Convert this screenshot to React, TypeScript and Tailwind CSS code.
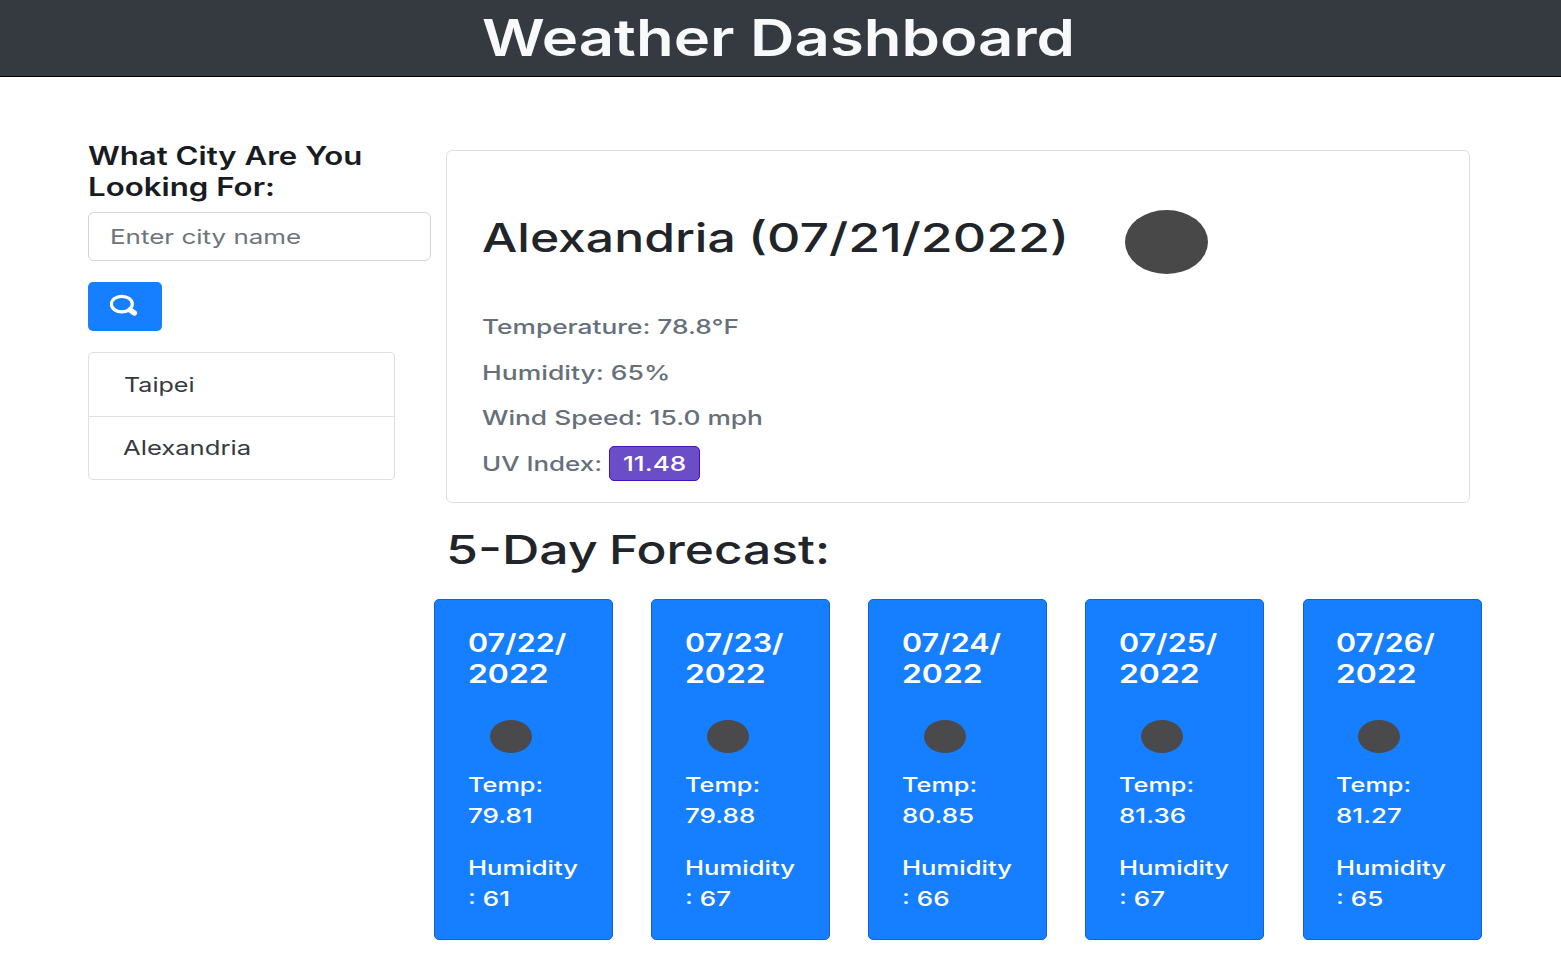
import React from "react";

type TextProps = { className?: string; children: React.ReactNode };

function Wide({ className = "", children }: TextProps) {
  return <span className={`block w-max origin-left whitespace-pre ${className}`}>{children}</span>;
}

const forecast = [
  { day: "07/22/", year: "2022", temp: "79.81", humidity: "61" },
  { day: "07/23/", year: "2022", temp: "79.88", humidity: "67" },
  { day: "07/24/", year: "2022", temp: "80.85", humidity: "66" },
  { day: "07/25/", year: "2022", temp: "81.36", humidity: "67" },
  { day: "07/26/", year: "2022", temp: "81.27", humidity: "65" },
];

function Header() {
  return (
    <header className="flex h-[77px] justify-center border-b border-black bg-[#343a40]">
      <h1 className="mr-[5px] h-[75px] scale-x-[1.208] text-[51px] leading-[75px] font-semibold whitespace-nowrap text-[#f8f9fa]">
        Weather Dashboard
      </h1>
    </header>
  );
}

function SearchIcon() {
  return (
    <svg width="28" height="22" viewBox="0 0 28 22" fill="none" className="block">
      <ellipse cx="11.8" cy="10.1" rx="10.5" ry="7.8" stroke="white" strokeWidth="3.2" />
      <path d="M20 16 L24.4 19" stroke="white" strokeWidth="5.4" strokeLinecap="round" />
    </svg>
  );
}

function Sidebar() {
  return (
    <aside className="w-[343px] pt-[64px]">
      <h5 className="text-[25px] leading-[31px] font-semibold text-[#181b1f]">
        <Wide className="scale-x-[1.246]">What City Are You</Wide>
        <Wide className="scale-x-[1.25]">Looking For:</Wide>
      </h5>
      <div className="mt-[9px] h-[49px] w-[343px] rounded-[6px] border-[1.5px] border-[#ced4da] pl-[20.5px]">
        <input
          type="text"
          placeholder="Enter city name"
          className="block h-[48px] w-[220px] origin-left scale-x-[1.298] bg-transparent text-[20px] outline-none placeholder:text-[#6c757d] placeholder:opacity-100"
        />
      </div>
      <button className="mt-[21px] flex h-[49px] w-[74px] justify-center rounded-[5px] bg-[#167fff] pt-[12px] pr-[3px]">
        <SearchIcon />
      </button>
      <ul className="mt-[21px] h-[128px] w-[307px] rounded-[5px] border-[1.5px] border-[#dfdfdf] text-[20px] text-[#343a40]">
        <li className="h-[64px] border-b-[1.5px] border-[#dfdfdf] pl-[34.5px] leading-[64px]">
          <Wide className="scale-x-[1.254]">Taipei</Wide>
        </li>
        <li className="h-[62px] pl-[34px] leading-[63px]">
          <Wide className="scale-x-[1.281]">Alexandria</Wide>
        </li>
      </ul>
    </aside>
  );
}

function CurrentWeather() {
  return (
    <section className="ml-[12px] h-[353px] w-[1024px] rounded-[6px] border-[1.5px] border-[#dfdfdf] pl-[35px]">
      <div className="flex h-[154px] items-start pt-[59px]">
        <h2 className="flex w-[643px] text-[40px] leading-[56px] font-medium text-[#212529]">
          <div className="w-[266px]">
            <Wide className="scale-x-[1.246]">Alexandria </Wide>
          </div>
          <Wide className="scale-x-[1.295]">(07/21/2022)</Wide>
        </h2>
        <div className="h-[64px] w-[83px] rounded-[50%] bg-[#484848]" />
      </div>
      <div className="text-[20px] leading-[45.6px] font-medium text-[#66707a]">
        <Wide className="scale-x-[1.314]">Temperature: 78.8°F</Wide>
        <Wide className="-ml-[0.5px] scale-x-[1.325]">Humidity: 65%</Wide>
        <Wide className="scale-x-[1.316]">Wind Speed: 15.0 mph</Wide>
        <div className="flex items-start">
          <div className="-ml-[0.5px] w-[127.5px]">
            <Wide className="scale-x-[1.295]">UV Index:</Wide>
          </div>
          <div className="mt-[4px] h-[35px] w-[91px] rounded-[5px] border border-[#4b11c0] bg-[#6b4dc8] pl-[12.5px] leading-[34px] text-white">
            <Wide className="scale-x-[1.308]">11.48</Wide>
          </div>
        </div>
      </div>
    </section>
  );
}

function DayCard({ day, year, temp, humidity }: (typeof forecast)[number]) {
  return (
    <article className="h-[341px] w-[179px] rounded-[5px] border border-[#1560d8] bg-[#167fff] pt-[28px] pl-[32.5px] text-white">
      <h5 className="text-[25px] leading-[31px] font-semibold">
        <Wide className="scale-x-[1.22]">{day}</Wide>
        <Wide className="scale-x-[1.275]">{year}</Wide>
      </h5>
      <div className="mt-[30px] ml-[22px] h-[33px] w-[42px] rounded-[50%] bg-[#4a494b]" />
      <div className="mt-[17px] text-[20px] leading-[31px] font-medium">
        <Wide className="scale-x-[1.265]">Temp:</Wide>
        <Wide className="scale-x-[1.3]">{temp}</Wide>
      </div>
      <div className="mt-[21px] text-[20px] leading-[31px] font-medium">
        <Wide className="scale-x-[1.28]">Humidity</Wide>
        <Wide className="scale-x-[1.3]">{`: ${humidity}`}</Wide>
      </div>
    </article>
  );
}

export default function App() {
  return (
    <div className="h-[956px] w-[1561px] overflow-hidden bg-white font-['Inter',sans-serif]">
      <Header />
      <main className="flex pl-[88px]">
        <Sidebar />
        <div className="ml-[3px] pt-[73px]">
          <CurrentWeather />
          <h2 className="mt-[18px] ml-[12px] flex h-[78px] text-[40px] leading-[57px] font-medium text-[#212529]">
            <div className="w-[163px]">
              <Wide className="scale-x-[1.295]">5-Day </Wide>
            </div>
            <Wide className="scale-x-[1.242]">Forecast:</Wide>
          </h2>
          <div className="flex w-[1047.5px] justify-between">
            {forecast.map((d) => (
              <DayCard key={d.day} {...d} />
            ))}
          </div>
        </div>
      </main>
    </div>
  );
}
